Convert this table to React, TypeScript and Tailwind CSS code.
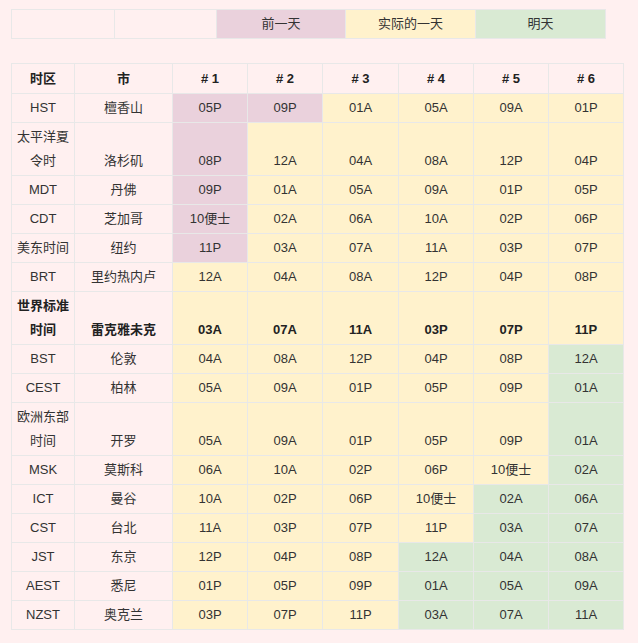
import * as React from 'react';

type Tone = 'p' | 'y' | 'g';

interface Row {
  zone: string;
  city: string;
  times: string[];
  pink: number;
  greenFrom: number;
  bold?: boolean;
}

const toneClass: Record<Tone, string> = {
  p: 'bg-[#ead1dc]',
  y: 'bg-[#fff2cc]',
  g: 'bg-[#d9ead3]',
};

const rows: Row[] = [
  { zone: 'HST', city: '檀香山', times: ['05P', '09P', '01A', '05A', '09A', '01P'], pink: 2, greenFrom: 6 },
  { zone: '太平洋夏令时', city: '洛杉矶', times: ['08P', '12A', '04A', '08A', '12P', '04P'], pink: 1, greenFrom: 6 },
  { zone: 'MDT', city: '丹佛', times: ['09P', '01A', '05A', '09A', '01P', '05P'], pink: 1, greenFrom: 6 },
  { zone: 'CDT', city: '芝加哥', times: ['10便士', '02A', '06A', '10A', '02P', '06P'], pink: 1, greenFrom: 6 },
  { zone: '美东时间', city: '纽约', times: ['11P', '03A', '07A', '11A', '03P', '07P'], pink: 1, greenFrom: 6 },
  { zone: 'BRT', city: '里约热内卢', times: ['12A', '04A', '08A', '12P', '04P', '08P'], pink: 0, greenFrom: 6 },
  { zone: '世界标准时间', city: '雷克雅未克', times: ['03A', '07A', '11A', '03P', '07P', '11P'], pink: 0, greenFrom: 6, bold: true },
  { zone: 'BST', city: '伦敦', times: ['04A', '08A', '12P', '04P', '08P', '12A'], pink: 0, greenFrom: 5 },
  { zone: 'CEST', city: '柏林', times: ['05A', '09A', '01P', '05P', '09P', '01A'], pink: 0, greenFrom: 5 },
  { zone: '欧洲东部时间', city: '开罗', times: ['05A', '09A', '01P', '05P', '09P', '01A'], pink: 0, greenFrom: 5 },
  { zone: 'MSK', city: '莫斯科', times: ['06A', '10A', '02P', '06P', '10便士', '02A'], pink: 0, greenFrom: 5 },
  { zone: 'ICT', city: '曼谷', times: ['10A', '02P', '06P', '10便士', '02A', '06A'], pink: 0, greenFrom: 4 },
  { zone: 'CST', city: '台北', times: ['11A', '03P', '07P', '11P', '03A', '07A'], pink: 0, greenFrom: 4 },
  { zone: 'JST', city: '东京', times: ['12P', '04P', '08P', '12A', '04A', '08A'], pink: 0, greenFrom: 3 },
  { zone: 'AEST', city: '悉尼', times: ['01P', '05P', '09P', '01A', '05A', '09A'], pink: 0, greenFrom: 3 },
  { zone: 'NZST', city: '奥克兰', times: ['03P', '07P', '11P', '03A', '07A', '11A'], pink: 0, greenFrom: 3 },
];

const cell = 'border border-[#e8e8e8] px-[5px] py-[2px] text-center align-bottom leading-[24px]';
const headCell = 'border border-[#e8e8e8] px-[5px] py-[2px] text-center align-middle leading-[25px]';

function toneAt(row: Row, i: number): Tone {
  if (i < row.pink) return 'p';
  if (i >= row.greenFrom) return 'g';
  return 'y';
}

export default function App() {
  return (
    <div
      className="min-h-screen bg-[#fff0f0] pl-[11px] pt-[9px] text-[13px] text-[#333]"
      style={{ fontFamily: '"Liberation Sans", Arial, "Noto Sans CJK SC", sans-serif' }}
    >
      <table className="w-[594px] table-fixed border-collapse">
        <colgroup>
          <col className="w-[103px]" />
          <col className="w-[102px]" />
          <col className="w-[129px]" />
          <col className="w-[130px]" />
          <col className="w-[130px]" />
        </colgroup>
        <tbody>
          <tr>
            <td className={cell}>&nbsp;</td>
            <td className={cell}>&nbsp;</td>
            <td className={`${cell} ${toneClass.p}`}>前一天</td>
            <td className={`${cell} ${toneClass.y}`}>实际的一天</td>
            <td className={`${cell} ${toneClass.g}`}>明天</td>
          </tr>
        </tbody>
      </table>

      <table className="mt-[24px] w-[612px] table-fixed border-collapse">
        <colgroup>
          <col className="w-[63px]" />
          <col className="w-[98px]" />
          <col className="w-[75px]" />
          <col className="w-[75px]" />
          <col className="w-[76px]" />
          <col className="w-[75px]" />
          <col className="w-[75px]" />
          <col className="w-[75px]" />
        </colgroup>
        <thead>
          <tr className="font-bold text-[#222]">
            <th className={headCell}>时区</th>
            <th className={headCell}>市</th>
            {[1, 2, 3, 4, 5, 6].map((n) => (
              <th key={n} className={headCell}>
                # {n}
              </th>
            ))}
          </tr>
        </thead>
        <tbody>
          {rows.map((row) => (
            <tr key={row.zone} className={row.bold ? 'font-bold text-[#222]' : ''}>
              <td className={cell}>{row.zone}</td>
              <td className={cell}>{row.city}</td>
              {row.times.map((t, i) => (
                <td key={i} className={`${cell} ${toneClass[toneAt(row, i)]}`}>
                  {t}
                </td>
              ))}
            </tr>
          ))}
        </tbody>
      </table>
    </div>
  );
}
